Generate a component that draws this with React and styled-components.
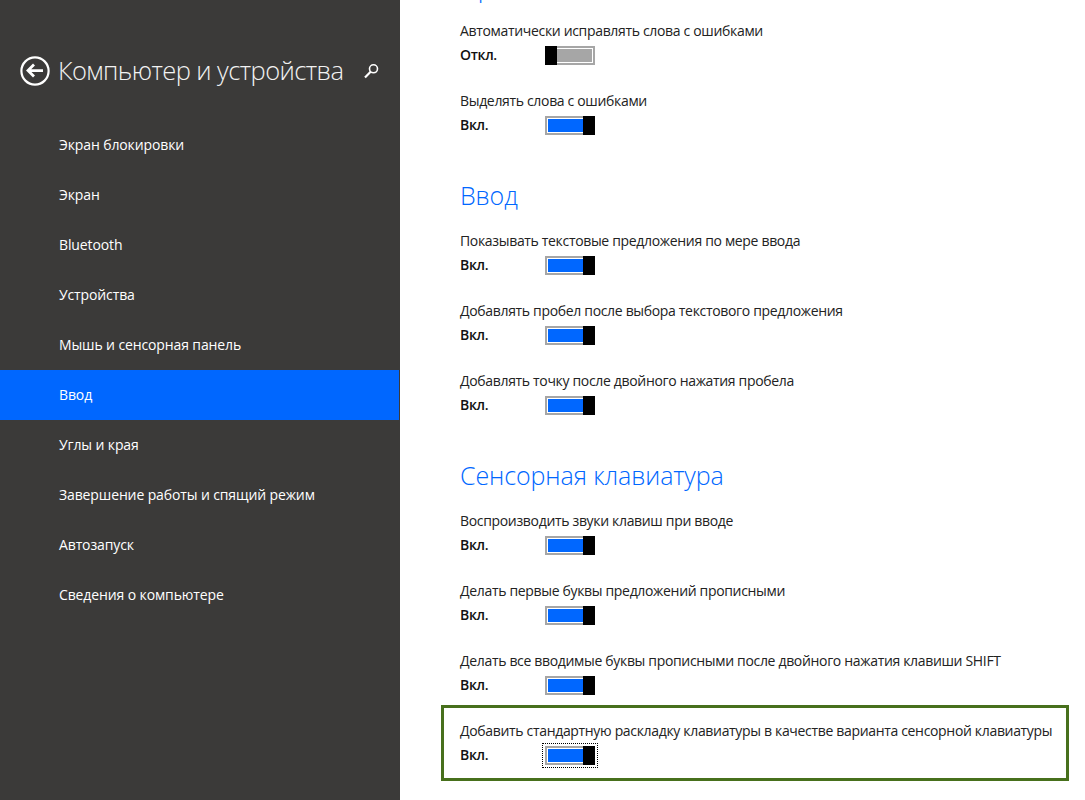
import React from "react";
import styled, { createGlobalStyle } from "styled-components";

const Global = createGlobalStyle`
  html, body { margin: 0; padding: 0; background: #fff; }
  body { font-family: "Open Sans", "Noto Sans", sans-serif; overflow: hidden; }
`;
const Page = styled.div`display: flex; width: 1085px; height: 800px; overflow: hidden; background: #fff;`;
const Sidebar = styled.aside`flex: 0 0 400px; height: 800px; background: #3b3a39; color: #fff; box-sizing: border-box; padding-top: 51px;`;
const Header = styled.header`display: flex; align-items: center; height: 40px; padding-left: 20px; margin-bottom: 29px;`;
const Title = styled.h1`margin: 0 0 2px 8px; width: 305px; font-weight: 300; font-size: 25.5px; line-height: 38px; color: #f2f2f2; white-space: nowrap; letter-spacing: -0.58px;`;
const Nav = styled.nav`display: flex; flex-direction: column;`;
const NavItem = styled.div`
  height: 50px; width: 399px; box-sizing: border-box; padding: 0 0 2px 59px; display: flex; align-items: center;
  font-size: 14px; color: #fff; background: ${p => (p.$active ? "#0067ff" : "transparent")}; letter-spacing: -0.12px;
`;
const Main = styled.main`flex: 1; padding-left: 42px; margin-top: -57px;`;
const Section = styled.section`display: flex; flex-direction: column;`;
const Heading = styled.h2`margin: 0; height: ${p => (p.$first ? "68px" : "70px")}; padding: 27px 0 0 18px; box-sizing: border-box; font-weight: 300; font-size: 25px; line-height: 34px; color: #0067ff; letter-spacing: -0.1px;`;
const Row = styled.div`padding: 10px 18px 0; height: 70px; box-sizing: border-box;`;
const Highlight = styled.div`
  width: 628px; height: 76px; margin: -6px 0 0 -1px; padding: 13px 0 0 16px; box-sizing: border-box;
  border: 3px solid #47701c;
`;
const Label = styled.div`font-size: 14px; line-height: 20px; color: #222; white-space: nowrap; letter-spacing: -0.33px;`;
const Control = styled.div`display: flex; align-items: center; height: 28px;`;
const State = styled.div`width: 85px; padding-bottom: 2px; font-size: 14px; font-weight: 600; color: #111; letter-spacing: -0.33px;`;

const Track = styled.div`
  position: relative; width: 50px; height: 19px; box-sizing: border-box; border: 2px solid #a6a6a6;
  background: ${p => (p.$on ? "#0067ff" : "#a6a6a6")}; box-shadow: inset 0 0 0 1px #fff;
`;
const Thumb = styled.div`position: absolute; top: -2px; bottom: -2px; width: 12px; background: #000; ${p => (p.$on ? "right: -2px;" : "left: -2px;")}`;
const Focus = styled.div`padding: 2px; margin: -3px; border: 1px dotted #000;`;

const Toggle = ({ on }) => <Track $on={on}><Thumb $on={on} /></Track>;

const Setting = ({ label, on = true }) => (
  <Row>
    <Label>{label}</Label>
    <Control><State>{on ? "Вкл." : "Откл."}</State><Toggle on={on} /></Control>
  </Row>
);

const BackIcon = () => (
  <svg width="30" height="30" viewBox="0 0 30 30">
    <circle cx="15" cy="15" r="13.6" fill="none" stroke="#fff" strokeWidth="2.2" />
    <path d="M8 14.6H23M14 8.6L8 14.6L14 20.6" fill="none" stroke="#fff" strokeWidth="2.8" />
  </svg>
);
const SearchIcon = () => (
  <svg width="16" height="18" viewBox="0 0 16 18">
    <circle cx="10.5" cy="6.8" r="4" fill="none" stroke="#fff" strokeWidth="1.6" />
    <path d="M7.6 9.8L2 15.5" stroke="#fff" strokeWidth="2.2" />
  </svg>
);

const nav = ["Экран блокировки","Экран","Bluetooth","Устройства","Мышь и сенсорная панель","Ввод","Углы и края","Завершение работы и спящий режим","Автозапуск","Сведения о компьютере"];

export default function App() {
  return (
    <Page>
      <Global />
      <Sidebar>
        <Header><BackIcon /><Title>Компьютер и устройства</Title><SearchIcon /></Header>
        <Nav>{nav.map(n => <NavItem key={n} $active={n === "Ввод"}>{n}</NavItem>)}</Nav>
      </Sidebar>
      <Main>
        <Section>
          <Heading $first>Правописание</Heading>
          <Setting label="Автоматически исправлять слова с ошибками" on={false} />
          <Setting label="Выделять слова с ошибками" />
        </Section>
        <Section>
          <Heading>Ввод</Heading>
          <Setting label="Показывать текстовые предложения по мере ввода" />
          <Setting label="Добавлять пробел после выбора текстового предложения" />
          <Setting label="Добавлять точку после двойного нажатия пробела" />
        </Section>
        <Section>
          <Heading>Сенсорная клавиатура</Heading>
          <Setting label="Воспроизводить звуки клавиш при вводе" />
          <Setting label="Делать первые буквы предложений прописными" />
          <Setting label="Делать все вводимые буквы прописными после двойного нажатия клавиши SHIFT" />
          <Highlight>
            <Label>Добавить стандартную раскладку клавиатуры в качестве варианта сенсорной клавиатуры</Label>
            <Control><State>Вкл.</State><Focus><Toggle on /></Focus></Control>
          </Highlight>
        </Section>
      </Main>
    </Page>
  );
}
